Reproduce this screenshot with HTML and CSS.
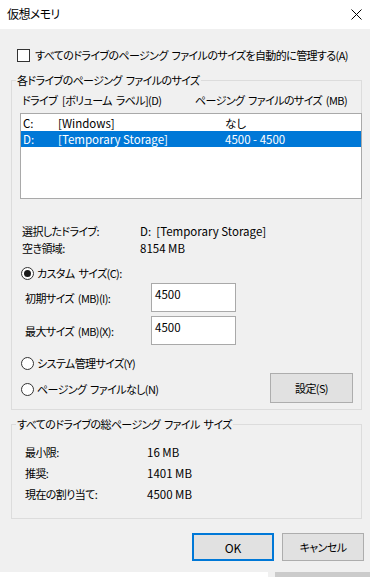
FILE: index.html
```html
<!DOCTYPE html>
<html lang="ja">
<head>
  <meta charset="UTF-8" />
  <title>仮想メモリ</title>
  <link rel="stylesheet" href="styles.css">
</head>
<body>
  <div class="window">
    <div class="titlebar">
      <span class="title">仮想メモリ</span>
      <svg class="close" width="11" height="11" viewBox="0 0 11 11">
        <path d="M0.5 0.5 L10.5 10.5 M10.5 0.5 L0.5 10.5" stroke="#000" stroke-width="1" fill="none" />
      </svg>
    </div>

    <div class="content">
      <label class="check">
        <span class="checkbox"></span>
        すべてのドライブのページング ファイルのサイズを自動的に管理する(A)
      </label>

      <fieldset class="group paging">
        <legend>各ドライブのページング ファイルのサイズ</legend>

        <div class="list-head">
          <span>ドライブ</span>
          <span>[ボリューム ラベル](D)</span>
          <span>ページング ファイルのサイズ (MB)</span>
        </div>

        <div class="listbox latin">
          <div class="row">
            <span>C:</span><span>[Windows]</span><span>なし</span>
          </div>
          <div class="row selected">
            <span>D:</span><span>[Temporary Storage]</span><span>4500 - 4500</span>
          </div>
        </div>

        <div class="info">
          <span>選択したドライブ:</span><span class="latin">D:&nbsp; [Temporary Storage]</span>
          <span>空き領域:</span><span class="latin">8154 MB</span>
        </div>

        <label class="radio custom"><span class="dot checked"></span>カスタム サイズ(C):</label>

        <div class="size-row first">
          <span class="size-label">初期サイズ (MB)(I):</span>
          <span class="input latin">4500</span>
        </div>
        <div class="size-row">
          <span class="size-label">最大サイズ (MB)(X):</span>
          <span class="input latin">4500</span>
        </div>

        <div class="bottom-row">
          <div class="radios">
            <label class="radio"><span class="dot"></span>システム管理サイズ(Y)</label>
            <label class="radio"><span class="dot"></span>ページング ファイルなし(N)</label>
          </div>
          <button class="btn set">設定(S)</button>
        </div>
      </fieldset>

      <fieldset class="group total">
        <legend>すべてのドライブの総ページング ファイル サイズ</legend>
        <div class="totals">
          <span>最小限:</span><span class="latin">16 MB</span>
          <span>推奨:</span><span class="latin">1401 MB</span>
          <span>現在の割り当て:</span><span class="latin">4500 MB</span>
        </div>
      </fieldset>

      <div class="actions">
        <button class="btn ok latin">OK</button>
        <button class="btn">キャンセル</button>
      </div>
    </div>

    <div class="strip">
      <span class="strip-white"></span>
      <span class="strip-gray"></span>
    </div>
  </div>
</body>
</html>
```

FILE: styles.css
```css
:root {
  --face: #f0f0f0;
  --text: #000;
  --group-line: #dcdcdc;
  --field-line: #a9a9a9;
  --select: #0078d7;
  --btn-face: #e1e1e1;
  --btn-line: #adadad;
}

* {
  box-sizing: border-box;
}

body {
  margin: 0;
  font-family: "Noto Sans CJK JP", "Noto Sans", sans-serif;
  font-feature-settings: "palt" 1;
  font-size: 11px;
  letter-spacing: -0.6px;
  word-spacing: 2px;
  line-height: 16px;
  color: var(--text);
  background: var(--face);
}

/* latin values keep normal spacing */
.latin {
  font-size: 11.5px;
  letter-spacing: 0;
  word-spacing: 0;
}

.window {
  width: 370px;
  height: 577px;
  display: flex;
  flex-direction: column;
  overflow: hidden;
}

.titlebar {
  height: 29px;
  background: #fff;
  display: flex;
  align-items: center;
  justify-content: space-between;
  padding: 0 8px 2px 7px;
}

.title {
  font-size: 12px;
}

.close {
  display: block;
  margin-top: 1px;
}

.content {
  flex: 1;
  padding: 0 8px 0 11px;
}

/* checkbox row */
.check {
  display: flex;
  align-items: center;
  height: 14px;
  margin-top: 19px;
  padding-left: 6px;
  white-space: nowrap;
}

.checkbox {
  width: 13px;
  height: 13px;
  border: 1px solid #333;
  background: #fff;
  margin-right: 5px;
  flex: none;
}

/* group boxes */
.group {
  margin: 0;
  border: 1px solid var(--group-line);
  min-width: 0;
}

.group legend {
  padding: 0 1px;
  line-height: 16px;
  white-space: nowrap;
}

.paging {
  margin-top: 10px;
  padding: 0 0 6px 10px;
}

.paging legend {
  margin-left: -6px;
}

.list-head {
  display: grid;
  grid-template-columns: 40px 133px auto;
  margin-top: 4px;
  white-space: nowrap;
}

.listbox {
  margin: 5px -1px 0 -2px;
  height: 86px;
  background: #fff;
  border: 1px solid var(--field-line);
  padding-top: 1px;
}

.row {
  display: grid;
  grid-template-columns: 35px 167px auto;
  height: 16px;
  padding-left: 2px;
  white-space: nowrap;
}

.row.selected {
  background: var(--select);
  color: #fff;
}

.info {
  display: grid;
  grid-template-columns: 118px auto;
  line-height: 17px;
  margin-top: 24px;
}

.radio {
  display: flex;
  align-items: center;
  height: 16px;
  margin-left: -1px;
  white-space: nowrap;
}

.custom {
  margin-top: 8px;
}

.dot {
  width: 13px;
  height: 13px;
  border: 1px solid #333;
  border-radius: 50%;
  background: #fff;
  margin-right: 3px;
  flex: none;
  display: flex;
  align-items: center;
  justify-content: center;
}

.dot.checked::after {
  content: "";
  width: 7px;
  height: 7px;
  border-radius: 50%;
  background: #1a1a1a;
}

.size-row {
  display: flex;
  align-items: center;
  margin-top: 4px;
  padding-left: 3px;
}

.size-row.first {
  margin-top: 2px;
}

.size-label {
  width: 126px;
  white-space: nowrap;
}

.input {
  width: 85px;
  height: 29px;
  background: #fff;
  border: 1px solid var(--field-line);
  padding: 2px 3px;
  align-self: flex-start;
}

.bottom-row {
  display: flex;
  justify-content: space-between;
  align-items: flex-start;
  margin-top: 10px;
}

.radios {
  display: flex;
  flex-direction: column;
  gap: 10px;
}

.btn {
  font-family: inherit;
  font-size: 11px;
  letter-spacing: -0.6px;
  font-feature-settings: "palt" 1;
  color: var(--text);
  background: var(--btn-face);
  border: 1px solid var(--btn-line);
  border-radius: 0;
  padding: 0;
  width: 82px;
  height: 28px;
}

.set {
  width: 83px;
  height: 30px;
  margin: 18px 8px 0 0;
}

.total {
  margin-top: 6px;
  padding: 0 0 16px 13px;
}

.total legend {
  margin-left: -9px;
}

.totals {
  display: grid;
  grid-template-columns: 122px auto;
  row-gap: 5px;
  margin-top: 12px;
}

.actions {
  display: flex;
  justify-content: flex-end;
  gap: 8px;
  margin: 14px -2px 0 0;
}

.ok {
  font-size: 12px;
  letter-spacing: 0;
  border: 2px solid var(--select);
}

.strip {
  height: 5px;
  display: flex;
  justify-content: space-between;
}

.strip-white {
  width: 268px;
  background: #fff;
}

.strip-gray {
  width: 95px;
  background: #cbcbcb;
}
```
